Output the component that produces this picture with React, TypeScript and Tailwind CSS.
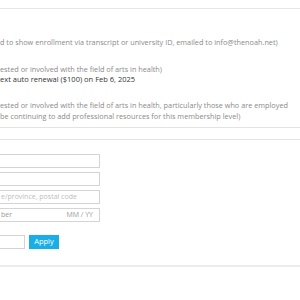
const Field = ({ placeholder, right, dark }: { placeholder?: string; right?: string; dark?: boolean }) => {
  return (
    <div
      className={
        dark
          ? "flex h-[14px] w-[110px] ml-[-10px] items-center justify-between border border-[#d4d4d4] bg-white pl-[10px] pr-[6px] text-[7px] text-[#9a9a9a]"
          : "flex h-[14px] w-[110px] ml-[-10px] items-center justify-between border border-[#d4d4d4] bg-white pl-[10px] pr-[6px] text-[7px] text-[#bdbdbd]"
      }
    >
      <span>{placeholder}</span>
      {right && <span>{right}</span>}
    </div>
  )
}

const App = () => {
  return (
    <div className="w-[300px] h-[300px] overflow-hidden bg-white font-['Open_Sans',sans-serif]">
      <div className="h-[8px]" />
      <div className="border-t border-[#e6e6e6]" />

      <p className="mt-[28px] h-[10px] whitespace-nowrap text-[7.3px] leading-[10px] text-[#8a8a8a]">
        d to show enrollment via transcript or university ID, emailed to info@thenoah.net)
      </p>

      <p className="mt-[17px] h-[10px] whitespace-nowrap text-[7.3px] leading-[10px] text-[#8a8a8a]">
        ested or involved with the field of arts in health)
      </p>
      <p className="h-[10px] whitespace-nowrap text-[7.5px] leading-[10px] text-[#333]">
        ext auto renewal ($100) on Feb 6, 2025
      </p>

      <p className="mt-[16px] h-[11px] whitespace-nowrap text-[7.3px] leading-[11px] text-[#8a8a8a]">
        ested or involved with the field of arts in health, particularly those who are employed
      </p>
      <p className="h-[11px] whitespace-nowrap text-[7.3px] leading-[11px] text-[#8a8a8a]">
        be continuing to add professional resources for this membership level)
      </p>

      <div className="mt-[5px] border-t border-[#e3e3e3]" />
      <div className="mt-[11px] border-t border-[#e3e3e3]" />

      <div className="mt-[14px] flex flex-col gap-[4px]">
        <Field />
        <Field />
        <Field placeholder="e/province, postal code" />
        <Field placeholder="ber" right="MM / YY" dark />
      </div>

      <div className="mt-[13px] flex items-center gap-[4px]">
        <div className="h-[14px] w-[35px] ml-[-10px] border border-[#d4d4d4] bg-white" />
        <button className="h-[14px] w-[30px] bg-[#1aaee6] text-[7.5px] text-white">Apply</button>
      </div>

      <div className="mt-[16px] h-[2px] bg-[#ececec]" />
    </div>
  )
}

export default App
